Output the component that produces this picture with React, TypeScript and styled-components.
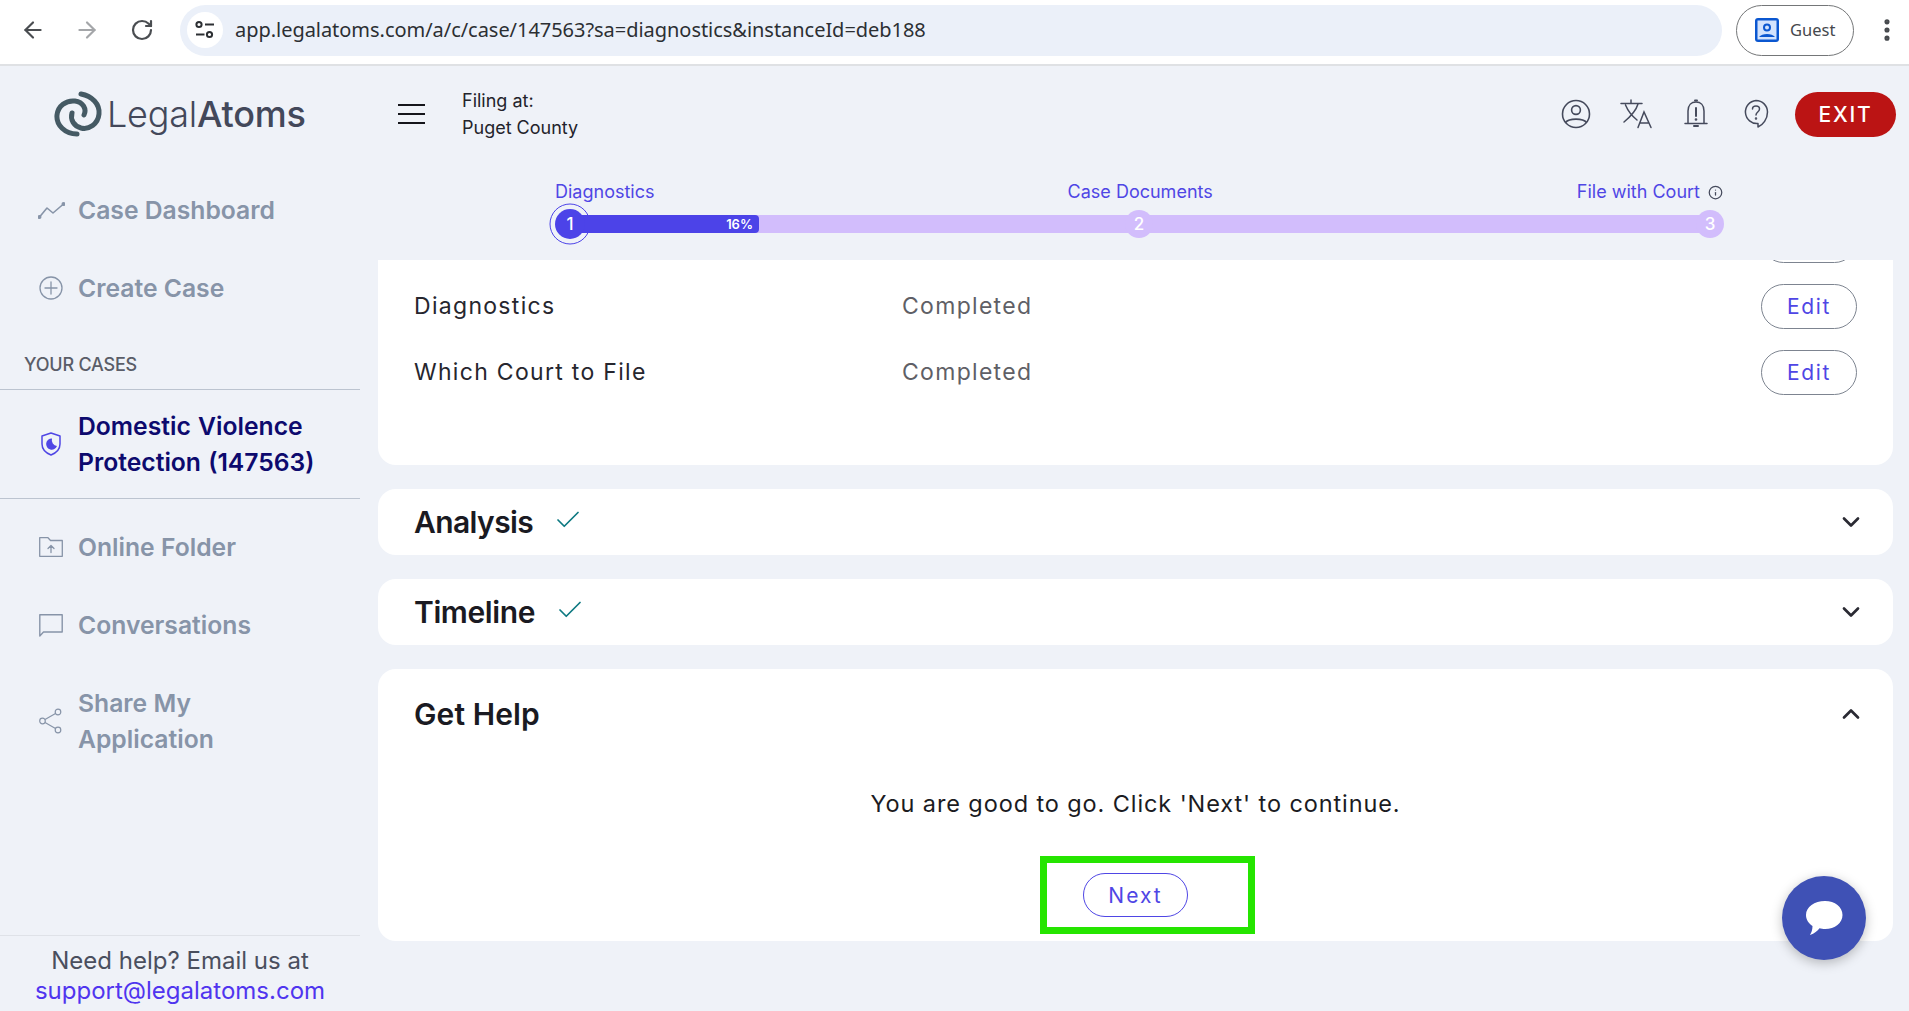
import React from 'react';
import styled, { createGlobalStyle } from 'styled-components';
import { ArrowLeft, ArrowRight, RotateCw, EllipsisVertical, ChevronDown, ChevronUp, Check, Info } from 'lucide-react';

const Global = createGlobalStyle`
  html, body { margin: 0; padding: 0; background: #eff2f8; }
  * { box-sizing: border-box; }
  body { font-family: Inter, "Liberation Sans", sans-serif; }
`;

const Page = styled.div`
  width: 1909px; height: 1011px; overflow: hidden; display: flex; flex-direction: column; background: #eff2f8; position: relative;
`;
const BrowserBar = styled.header`
  height: 66px; flex: none; background: #fff; border-bottom: 2px solid #dfe1e4;
  display: flex; align-items: center; padding: 0 0 4px 14px; color: #4a4d51;
`;
const NavIcons = styled.div`
  display: flex; align-items: center; gap: 28px; width: 166px; flex: none; padding-left: 6px;
`;
const Reload = styled(RotateCw)`
  margin-left: 2px;
`;
const UrlPill = styled.div`
  width: 1542px; height: 51px; flex: none; border-radius: 26px; background: #ebf0f9; display: flex; align-items: center; padding-left: 7px;
`;
const SiteButton = styled.span`
  width: 36px; height: 36px; border-radius: 50%; background: #fff; display: flex; align-items: center; justify-content: center; flex: none;
`;
const UrlText = styled.span`
  margin: -1px 0 0 12px; font: 20px "Noto Sans", sans-serif; color: #2c2f33; letter-spacing: -0.04px; white-space: nowrap;
`;
const GuestPill = styled.div`
  margin-left: 14px; width: 118px; height: 51px; border-radius: 26px; border: 1.5px solid #747678; display: flex; align-items: center; padding-left: 18px; gap: 11px; font: 16.5px "Noto Sans", sans-serif; color: #46494d; flex: none;
`;
const GuestLabel = styled.span`
  margin-top: -2px;
`;
const MenuDots = styled.span`
  margin-left: 19px; display: flex; color: #46494d;
`;
const Body = styled.div`
  flex: 1; min-height: 0; display: grid; grid-template-columns: 360px 1fr;
`;
const Sidebar = styled.aside`
  display: flex; flex-direction: column; min-height: 0;
`;
const LogoBlock = styled.div`
  height: 105px; display: flex; align-items: center; padding: 0 0 9px 54px; flex: none;
`;
const LogoText = styled.span`
  margin-left: 3px; font-size: 36px; font-weight: 300; color: #43485a; letter-spacing: -0.2px; b { font-weight: 500; }
`;
const NavRow = styled.div<{ $active?: boolean; $tall?: boolean }>`
  display: flex; align-items: center; padding: 0 40px 0 37px; gap: 13px; min-height: ${p => (p.$tall ? 114 : 78)}px; flex: none;
  font-size: 24.7px; line-height: 36px; font-weight: 600; color: ${p => (p.$active ? '#0d0a6e' : '#8794a8')};
`;
const IconSlot = styled.span`
  width: 28px; flex: none; display: flex; justify-content: center; align-items: center;
`;
const CaseRow = styled(NavRow)`
  height: 110px; border-top: 1.5px solid #bcc4d0; border-bottom: 1.5px solid #bcc4d0; margin-bottom: 9px;
  word-spacing: 1px;
`;
const SectionHead = styled.div`
  height: 62px; flex: none; padding: 21px 0 0 24px; font-size: 18px; line-height: 34px; font-weight: 500; color: #5a5d68; letter-spacing: -0.2px;
`;
const SideFooter = styled.div`
  margin-top: auto; height: 76px; flex: none; border-top: 1px solid #dfe2e8; text-align: center; font-size: 24px; line-height: 30px; color: #4a4f5e; padding-top: 10px;
`;
const MailLink = styled.a`
  display: block; color: #4f35ef;
`;
const Main = styled.main`
  display: flex; flex-direction: column; min-height: 0; min-width: 0; padding: 0 16px 0 18px;
`;
const TopBar = styled.div`
  height: 96px; flex: none; display: flex; align-items: center; padding-left: 20px; color: #1a1a22;
`;
const Burger = styled.span`
  display: flex; flex-direction: column; gap: 7px; width: 27px;
  i { display: block; height: 2px; background: #15151b; }
`;
const FilingText = styled.div`
  margin-left: 37px; font-size: 18px; line-height: 27px; color: #23232b;
`;
const TopIcons = styled.div`
  margin-left: auto; display: flex; align-items: center; color: #454a5c;
`;
const TopIcon = styled.span`
  width: 60px; display: flex; justify-content: center;
`;
const ExitButton = styled.button`
  width: 101px; height: 45px; border: 0; border-radius: 23px; background: #bb1414; color: #fff; font: 500 21px Inter, sans-serif; letter-spacing: 1.8px; margin-left: 9px; margin-right: -3px;
`;
const Stepper = styled.div`
  height: 98px; flex: none; padding: 17px 0 0 177px; width: 1345px;
`;
const StepLabels = styled.div`
  display: flex; justify-content: space-between; font-size: 18px; line-height: 26px; color: #4f46e5;
`;
const MiddleLabel = styled.span`
  margin-left: 49px;
`;
const LabelEnd = styled.span`
  display: flex; align-items: center; gap: 8px;
`;
const Track = styled.div`
  position: relative; margin: 10px 4px 0 15px; height: 18px; background: #d2bdfc; border-radius: 9px;
`;
const Fill = styled.div<{ $w: number }>`
  position: relative; width: ${p => p.$w}px; height: 18px; background: #4c43e8; border-radius: 4px; color: #fff; font-size: 13px; font-weight: 600; line-height: 18px; text-align: right; padding-right: 6px;
`;
const StepRing = styled.span`
  position: absolute; top: 50%; left: 0; width: 41px; height: 41px; border-radius: 50%; border: 1.2px solid #4c43e8; transform: translate(-50%, -50%);
`;
const StepDot = styled.span<{ $current?: boolean; $left: number }>`
  position: absolute; top: 50%; left: ${p => p.$left}px; transform: translate(-50%, -50%);
  width: ${p => (p.$current ? 30 : 28)}px; height: ${p => (p.$current ? 30 : 28)}px; border-radius: 50%;
  background: ${p => (p.$current ? '#4c43e8' : '#d2bdfc')}; color: #fff; font-size: 17px; font-weight: 500;
  display: flex; align-items: center; justify-content: center;
`;
const Scroll = styled.div`
  flex: 1; min-height: 0; overflow: hidden; display: flex; flex-direction: column; justify-content: flex-end; gap: 24px; padding-bottom: 70px;
`;
const Card = styled.section`
  background: #fff; border-radius: 18px; flex: none; padding: 0 36px;
`;
const StatusCard = styled(Card)`
  padding-bottom: 60px;
`;
const StatusRow = styled.div`
  height: 66px; display: flex; align-items: center; font-size: 23px; letter-spacing: 1.3px; color: #26262e;
`;
const StatusName = styled.span`
  width: 488px; 
`;
const StatusValue = styled.span`
  color: #5f5f66; 
`;
const EditButton = styled.button`
  margin-left: auto; width: 96px; height: 45px; border-radius: 23px; border: 1px solid #7d8490; background: #fff; color: #4f46e5; font: 21px Inter, sans-serif; letter-spacing: 1.7px; margin-right: 0;
`;
const AccordionHead = styled.div<{ $tall?: boolean }>`
  height: ${p => (p.$tall ? 90 : 66)}px; display: flex; align-items: center; gap: 20px; color: #1a1a22;
`;
const AccordionTitle = styled.h2<{ $track: number }>`
  margin: 0; font-size: 30px; font-weight: 600; letter-spacing: ${p => p.$track}px;
`;
const Tick = styled.span`
  display: flex; color: #0e7a82; margin-top: -4px;
`;
const Chevron = styled.span`
  margin-left: auto; display: flex; color: #2a2a33; margin-right: -8px;
`;
const HelpBody = styled.div`
  display: flex; flex-direction: column; align-items: center; height: 182px; 
`;
const HelpText = styled.p`
  margin: 28px 0 0; font-size: 23.5px; line-height: 34px; letter-spacing: 0.9px; color: #1b1b22;
`;
const NextButton = styled.button`
  margin-top: 52px; width: 105px; height: 44px; border-radius: 22px; border: 1px solid #4f46e5; background: #fff; color: #4f46e5; font: 21px Inter, sans-serif; letter-spacing: 2px;
`;
const Highlight = styled.div`
  position: absolute; left: 1040px; top: 856px; width: 215px; height: 78px; border: 7px solid #25e500; pointer-events: none;
`;
const ChatFab = styled.button`
  position: absolute; left: 1782px; top: 876px; width: 84px; height: 84px; border-radius: 50%; border: 0; background: #3f51b5; box-shadow: 0 3px 12px rgba(0,0,0,.25); display: flex; align-items: center; justify-content: center;
`;

const LogoMark = () => (
  <svg width="50" height="46" viewBox="8 10 50 46" fill="none" stroke="#455a64" strokeWidth="5" strokeLinecap="round">
    <path d="M35 13 C46 15 54 23 53 33 C52 43 43 49 35 47 C28 45 24 39 26 32" />
    <path d="M31 53 C19 53 10 44 11 34 C12 25 20 19 29 20 C37 21 41 28 38 34" />
  </svg>
);
const IconDash = () => (
  <svg width="27" height="17" viewBox="0 0 27 17" fill="none" stroke="#8794a8" strokeWidth="1.6" strokeLinecap="round" strokeLinejoin="round"><path d="M1.5 15 L9 6 L15 11 L25.5 2" /><circle cx="1.5" cy="15" r="1.2" fill="#8794a8" /><circle cx="25.5" cy="2" r="1.2" fill="#8794a8" /></svg>
);
const IconPlus = () => (
  <svg width="24" height="24" viewBox="0 0 24 24" fill="none" stroke="#8794a8" strokeWidth="1.3" strokeLinecap="round"><circle cx="12" cy="12" r="11" /><path d="M12 6v12M6 12h12" /></svg>
);
const IconShield = () => (
  <svg width="20" height="24" viewBox="0 0 20 24" fill="none"><path d="M10 1 L19 4 V12 C19 17 15 21 10 23 C5 21 1 17 1 12 V4 Z" stroke="#4f46e5" strokeWidth="1.5" strokeLinejoin="round" /><path d="M11 6.5 A5.6 5.6 0 1 0 16 14 A6 6 0 0 1 11 6.5 Z" fill="#4f46e5" /></svg>
);
const IconFolder = () => (
  <svg width="24" height="20" viewBox="0 0 24 20" fill="none" stroke="#8794a8" strokeWidth="1.3" strokeLinejoin="round" strokeLinecap="round"><path d="M.7 19.3 V.7 H9 L11.5 3.5 H23.3 V19.3 Z" /><path d="M12 15.5 V8.5 M9 11.5 L12 8.5 L15 11.5" /></svg>
);
const IconChat = () => (
  <svg width="24" height="23" viewBox="0 0 24 23" fill="none" stroke="#8794a8" strokeWidth="1.4" strokeLinejoin="round"><path d="M.8 .8 H23.2 V18 H4.5 L.8 22 Z" /></svg>
);
const IconShare = () => (
  <svg width="24" height="26" viewBox="0 0 24 26" fill="none" stroke="#8794a8" strokeWidth="1.2"><circle cx="3.5" cy="13" r="2.8" /><circle cx="19" cy="4" r="2.8" /><circle cx="19" cy="22" r="2.8" /><path d="M6 11.5 L16.5 5.5 M6 14.5 L16.5 20.5" /></svg>
);
const IconUser = () => (
  <svg width="30" height="30" viewBox="0 0 30 30" fill="none" stroke="currentColor" strokeWidth="1.6"><circle cx="15" cy="15" r="13.5" /><circle cx="15" cy="11" r="4.4" /><path d="M4.5 23.5 C8 19 22 19 25.5 23.5" /></svg>
);
const IconTranslate = () => (
  <svg width="32" height="30" viewBox="0 0 32 30" fill="none" stroke="currentColor" strokeWidth="1.5" strokeLinecap="round"><path d="M1 4.5 H22 M11 1 V4.5 M18 5 C16 12 10 18 4 23 M5.5 6 C8 12 12 17 17 21" /><path d="M18 28.5 L24 13 L31 28.5 M20 24 H29" /></svg>
);
const IconBell = () => (
  <svg width="24" height="30" viewBox="0 0 24 30" fill="none" stroke="currentColor" strokeWidth="1.5" strokeLinecap="round"><path d="M1 24.5 H23 M4 24.5 V12 C4 6 7.5 3 12 3 C16.5 3 20 6 20 12 V24.5" /><path d="M12 9 V17" strokeWidth="2" /><circle cx="12" cy="20.5" r=".6" /><path d="M10 27 H14 M11 1.5 H13" strokeWidth="2" /></svg>
);
const IconHelp = () => (
  <svg width="26" height="30" viewBox="0 0 26 30" fill="none" stroke="currentColor" strokeWidth="1.5" strokeLinecap="round" strokeLinejoin="round"><path d="M13 1.5 A11.5 11.5 0 1 0 15 24.5 L15 28 C20 26 24.5 20 24.5 13 A11.5 11.5 0 0 0 13 1.5 Z" /><path d="M9.5 10 C9.5 6 16.5 6 16.5 10 C16.5 13 13 13 13 16" /><circle cx="13" cy="19.5" r=".5" /></svg>
);
const IconSite = () => (
  <svg width="22" height="20" viewBox="0 0 22 20" fill="none" stroke="#2c2f33" strokeWidth="2"><circle cx="5" cy="4.5" r="2.6" /><path d="M11 4.5 H20" /><circle cx="15.5" cy="14.5" r="2.6" /><path d="M2 14.5 H10.5" /></svg>
);
const IconGuest = () => (
  <svg width="24" height="24" viewBox="0 0 24 24"><rect width="24" height="24" rx="3" fill="#0b57d0" /><rect x="2.5" y="2.5" width="19" height="19" fill="#d3e3fd" /><circle cx="12" cy="9.5" r="3" fill="none" stroke="#0b57d0" strokeWidth="2" /><path d="M4 19 C7 15 17 15 20 19 Z" fill="#0b57d0" /></svg>
);
const IconBubble = () => (
  <svg width="38" height="36" viewBox="0 0 38 36"><path d="M20 1 C30 1 37.5 7 37.5 15 C37.5 23 30 29 20 29 C18 29 16 28.8 14.5 28.3 C12.5 31 9.5 33.5 5 35 C6.5 32.5 7.5 29.5 7.5 26 C3.5 23.5 1 19.5 1 15 C1 7 9.5 1 20 1 Z" fill="#fff" /></svg>
);

export default function App() {
  return (
    <Page>
      <Global />
      <BrowserBar>
        <NavIcons>
          <ArrowLeft size={26} strokeWidth={2} />
          <ArrowRight size={26} strokeWidth={2} color="#a4a6a9" />
          <Reload size={24} strokeWidth={2.2} />
        </NavIcons>
        <UrlPill>
          <SiteButton><IconSite /></SiteButton>
          <UrlText>app.legalatoms.com/a/c/case/147563?sa=diagnostics&amp;instanceId=deb188</UrlText>
        </UrlPill>
        <GuestPill><IconGuest /><GuestLabel>Guest</GuestLabel></GuestPill>
        <MenuDots><EllipsisVertical size={28} strokeWidth={2.4} /></MenuDots>
      </BrowserBar>
      <Body>
        <Sidebar>
          <LogoBlock><LogoMark /><LogoText>Legal<b>Atoms</b></LogoText></LogoBlock>
          <NavRow><IconSlot><IconDash /></IconSlot>Case Dashboard</NavRow>
          <NavRow><IconSlot><IconPlus /></IconSlot>Create Case</NavRow>
          <SectionHead>YOUR CASES</SectionHead>
          <CaseRow $active><IconSlot><IconShield /></IconSlot><span>Domestic Violence Protection (147563)</span></CaseRow>
          <NavRow><IconSlot><IconFolder /></IconSlot>Online Folder</NavRow>
          <NavRow><IconSlot><IconChat /></IconSlot>Conversations</NavRow>
          <NavRow $tall><IconSlot><IconShare /></IconSlot><span>Share My Application</span></NavRow>
          <SideFooter>Need help? Email us at<MailLink>support@legalatoms.com</MailLink></SideFooter>
        </Sidebar>
        <Main>
          <TopBar>
            <Burger><i /><i /><i /></Burger>
            <FilingText>Filing at:<br />Puget County</FilingText>
            <TopIcons>
              <TopIcon><IconUser /></TopIcon>
              <TopIcon><IconTranslate /></TopIcon>
              <TopIcon><IconBell /></TopIcon>
              <TopIcon><IconHelp /></TopIcon>
              <ExitButton>EXIT</ExitButton>
            </TopIcons>
          </TopBar>
          <Stepper>
            <StepLabels>
              <span>Diagnostics</span>
              <MiddleLabel>Case Documents</MiddleLabel>
              <LabelEnd>File with Court<Info size={15} color="#454a5c" /></LabelEnd>
            </StepLabels>
            <Track>
              <StepRing />
              <Fill $w={189}>16%</Fill>
              <StepDot $current $left={0}>1</StepDot>
              <StepDot $left={569}>2</StepDot>
              <StepDot $left={1140}>3</StepDot>
            </Track>
          </Stepper>
          <Scroll>
            <StatusCard>
              <StatusRow><EditButton aria-label="Edit" /></StatusRow>
              <StatusRow><StatusName>Diagnostics</StatusName><StatusValue>Completed</StatusValue><EditButton>Edit</EditButton></StatusRow>
              <StatusRow><StatusName>Which Court to File</StatusName><StatusValue>Completed</StatusValue><EditButton>Edit</EditButton></StatusRow>
            </StatusCard>
            <Card><AccordionHead><AccordionTitle $track={-0.6}>Analysis</AccordionTitle><Tick><Check size={30} strokeWidth={1.4} /></Tick><Chevron><ChevronDown size={28} strokeWidth={2.3} /></Chevron></AccordionHead></Card>
            <Card><AccordionHead><AccordionTitle $track={-0.4}>Timeline</AccordionTitle><Tick><Check size={30} strokeWidth={1.4} /></Tick><Chevron><ChevronDown size={28} strokeWidth={2.3} /></Chevron></AccordionHead></Card>
            <Card>
              <AccordionHead $tall><AccordionTitle $track={0.1}>Get Help</AccordionTitle><Chevron><ChevronUp size={28} strokeWidth={2.3} /></Chevron></AccordionHead>
              <HelpBody>
                <HelpText>You are good to go. Click 'Next' to continue.</HelpText>
                <NextButton>Next</NextButton>
              </HelpBody>
            </Card>
          </Scroll>
        </Main>
      </Body>
      <Highlight />
      <ChatFab><IconBubble /></ChatFab>
    </Page>
  );
}
